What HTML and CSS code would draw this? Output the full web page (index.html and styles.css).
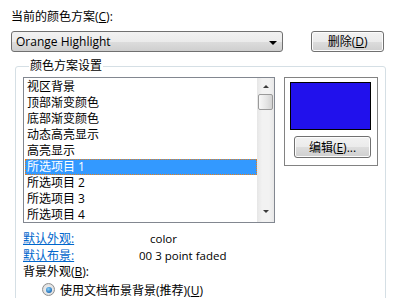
FILE: index.html
```html
<!DOCTYPE html>
<html lang="zh-CN">
<head>
    <meta charset="UTF-8">
    <title>颜色方案</title>
    <link rel="stylesheet" href="styles.css">
</head>
<body>

<div class="dialog">
    <div class="scheme-label">当前的颜色方案(<u>C</u>):</div>

    <div class="scheme-row">
        <div class="combo">
            <span class="combo-text">Orange Highlight</span>
            <span class="combo-arrow"></span>
        </div>
        <button class="btn btn-delete">删除(<u>D</u>)</button>
    </div>

    <fieldset class="group">
        <legend>颜色方案设置</legend>

        <div class="group-top">
            <div class="listbox">
                <ul class="items">
                    <li>视区背景</li>
                    <li>顶部渐变颜色</li>
                    <li>底部渐变颜色</li>
                    <li>动态高亮显示</li>
                    <li>高亮显示</li>
                    <li class="selected">所选项目 1</li>
                    <li>所选项目 2</li>
                    <li>所选项目 3</li>
                    <li>所选项目 4</li>
                </ul>
                <div class="scrollbar">
                    <span class="arrow-up"></span>
                    <span class="thumb"></span>
                    <span class="arrow-down"></span>
                </div>
            </div>

            <div class="color-panel">
                <div class="swatch"></div>
                <button class="btn btn-edit">编辑(<u>E</u>)...</button>
            </div>
        </div>

        <div class="info">
            <div class="info-row">
                <a class="link" href="#">默认外观:</a>
                <span class="info-value value-look">color</span>
            </div>
            <div class="info-row">
                <a class="link" href="#">默认布景:</a>
                <span class="info-value value-bg">00 3 point faded</span>
            </div>
        </div>

        <div class="bg-label">背景外观(<u>B</u>):</div>
        <label class="radio-row">
            <span class="radio checked"></span>
            <span>使用文档布景背景(推荐)(<u>U</u>)</span>
        </label>
        <label class="radio-row">
            <span class="radio"></span>
            <span>使用颜色方案背景(<u>S</u>)</span>
        </label>
    </fieldset>
</div>

</body>
</html>
```

FILE: styles.css
```css
body {
    margin: 0;
    background-color: #ffffff;
    color: #000000;
    font-family: "Open Sans", "Noto Sans CJK SC", sans-serif;
    font-size: 12px;
    overflow: hidden;
}

u {
    text-decoration: underline;
}

.dialog {
    padding: 9px 11px 0 11px;
    width: 373px;
}

.scheme-label {
    line-height: 16px;
    height: 16px;
}

.scheme-row {
    display: flex;
    align-items: flex-start;
    margin-top: 6px;
}

.combo {
    height: 19px;
    border: 1px solid #707070;
    border-radius: 3px;
    background: linear-gradient(#f2f2f2 0%, #ebebeb 50%, #dddddd 51%, #cfcfcf 100%);
    display: flex;
    align-items: center;
    justify-content: space-between;
    padding: 0 5px 0 4px;
    width: 263px;
}

.combo-text {
    font-size: 12px;
    line-height: 19px;
}

.combo-arrow {
    width: 0;
    height: 0;
    border-left: 4px solid transparent;
    border-right: 4px solid transparent;
    border-top: 4px solid #000000;
    margin-top: 2px;
}

.btn {
    font-family: "Open Sans", "Noto Sans CJK SC", sans-serif;
    font-size: 12px;
    color: #000000;
    border: 1px solid #707070;
    border-radius: 3px;
    background: linear-gradient(#f2f2f2 0%, #ebebeb 50%, #dddddd 51%, #cfcfcf 100%);
    box-shadow: inset 0 0 0 1px #fcfcfc;
    padding: 0;
    cursor: pointer;
}

.btn-delete {
    width: 73px;
    height: 21px;
    margin-left: 28px;
    line-height: 18px;
}

.group {
    margin: 7px 0 0 4px;
    width: 353px;
    height: 260px;
    border: 1px solid #d5dfe5;
    border-radius: 3px;
    padding: 4px 7px 0 7px;
}

.group legend {
    padding: 0 1px;
    margin-left: 6px;
    line-height: 14px;
}

.group-top {
    display: flex;
    align-items: flex-start;
    gap: 9px;
}

.listbox {
    width: 250px;
    height: 144px;
    border: 1px solid #828790;
    display: flex;
    overflow: hidden;
}

.items {
    list-style: none;
    margin: 0;
    padding: 1px 0 0 1px;
    flex: 1;
}

.items li {
    height: 16px;
    line-height: 16px;
    padding-left: 2px;
    white-space: nowrap;
}

.items li.selected {
    background-color: #3399ff;
    color: #ffffff;
    outline: 1px dotted #e8801a;
    outline-offset: -1px;
}

.scrollbar {
    width: 17px;
    background: linear-gradient(to right, #e6e6e6, #f2f2f2 30%, #f2f2f2 70%, #e8e8e8);
    display: flex;
    flex-direction: column;
    align-items: center;
    padding-top: 7px;
}

.arrow-up {
    width: 0;
    height: 0;
    border-left: 3px solid transparent;
    border-right: 3px solid transparent;
    border-bottom: 3px solid #3c3c3c;
}

.thumb {
    width: 13px;
    height: 14px;
    margin-top: 6px;
    border: 1px solid #9a9a9a;
    border-radius: 2px;
    background: linear-gradient(to right, #f8f8f8, #e4e4e4 60%, #d2d2d2);
}

.arrow-down {
    width: 0;
    height: 0;
    margin-top: 100px;
    border-left: 3px solid transparent;
    border-right: 3px solid transparent;
    border-top: 3px solid #3c3c3c;
}

.color-panel {
    border: 1px solid #828282;
    padding: 4px 0 0 5px;
    box-sizing: border-box;
    width: 94px;
    height: 89px;
}

.swatch {
    width: 79px;
    height: 46px;
    border: 1px solid #000000;
    background-color: #2111ec;
}

.btn-edit {
    display: block;
    width: 77px;
    height: 22px;
    margin: 6px 0 0 4px;
    line-height: 19px;
}

.info {
    margin-top: 7px;
}

.info-row {
    display: flex;
    height: 17px;
    line-height: 17px;
    white-space: nowrap;
}

.link {
    color: #0066cc;
    text-decoration: underline;
    display: inline-block;
    width: 56px;
}

.info-value {
    font-size: 11.5px;
}

.value-look {
    margin-left: 71px;
}

.value-bg {
    margin-left: 60px;
}

.bg-label {
    line-height: 16px;
}

.radio-row {
    display: flex;
    align-items: center;
    height: 17px;
    padding-left: 19px;
    gap: 5px;
    margin-top: 1px;
    white-space: nowrap;
}

.radio {
    width: 11px;
    height: 11px;
    border: 1px solid #8e8f8f;
    border-radius: 50%;
    background: radial-gradient(circle, #f4f4f4, #d8d8d8);
    display: flex;
    align-items: center;
    justify-content: center;
}

.radio.checked::after {
    content: "";
    width: 6px;
    height: 6px;
    border-radius: 50%;
    background: radial-gradient(circle at 40% 35%, #8fd3f7, #2c7cc4 60%, #0d4a8c);
}
```
